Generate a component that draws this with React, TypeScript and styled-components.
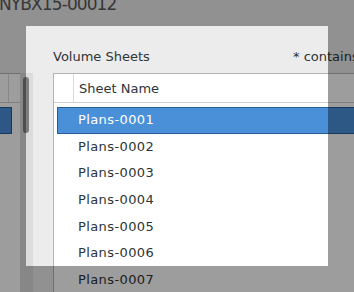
import React from 'react';
import styled, { createGlobalStyle } from 'styled-components';

const Global = createGlobalStyle`
  html, body { margin: 0; padding: 0; }
  body {
    width: 354px;
    height: 292px;
    overflow: hidden;
    background: #ececec;
    font-family: "DejaVu Sans", "Noto Sans", sans-serif;
    color: #2e3436;
  }
`;

const Screen = styled.div`
  position: relative;
  width: 354px;
  height: 292px;
  overflow: hidden;
  display: flex;
  flex-direction: column;
`;

const WindowTitle = styled.div`
  margin-top: -6px;
  margin-left: -1px;
  height: 32px;
  flex: 0 0 32px;
  font-size: 17px;
  letter-spacing: -0.9px;
  line-height: 21px;
  color: #5a5a5a;
  white-space: nowrap;
`;

const Workspace = styled.div`
  flex: 1;
  display: grid;
  grid-template-columns: 20px 13px 420px;
  grid-template-rows: 47px 1fr;
  min-height: 0;
`;

const LabelRow = styled.div`
  grid-column: 3;
  grid-row: 1;
  display: flex;
  align-items: flex-start;
  padding: 23px 0 0 20px;
  font-size: 13px;
  line-height: 16px;
  white-space: nowrap;
`;

const PaneLabel = styled.span`
  flex: 0 0 240px;
`;

const Note = styled.span`
  flex: none;
`;

const SideList = styled.div`
  grid-column: 1;
  grid-row: 2;
  background: #ffffff;
  border-top: 1px solid #b4b4b4;
  overflow: hidden;
`;

const SideHeader = styled.div`
  display: flex;
  height: 28px;
  border-bottom: 1px solid #cfcfcf;
`;

const SideHeaderCell = styled.div`
  width: 8px;
  border-right: 1px solid #dcdcdc;
`;

const SideRows = styled.div`
  padding-top: 4px;
`;

const SideSelected = styled.div`
  margin-left: -2px;
  width: 14px;
  height: 26.667px;
  box-sizing: border-box;
  background: #4a90d9;
  border: 1px solid #2a5d96;
`;

const ScrollTrack = styled.div`
  grid-column: 2;
  grid-row: 2;
  background: #dcdcdc;
  padding: 4px 0 0 3px;
`;

const ScrollThumb = styled.div`
  width: 6px;
  height: 56px;
  border-radius: 3px;
  background: #7d7d7d;
`;

const SheetsPane = styled.div`
  grid-column: 3;
  grid-row: 2;
  padding-left: 20px;
  display: flex;
  min-height: 0;
`;

const Table = styled.div`
  flex: 1;
  background: #ffffff;
  border-top: 1px solid #b4b4b4;
  border-left: 1px solid #b4b4b4;
  display: flex;
  flex-direction: column;
`;

const HeaderRow = styled.div`
  display: flex;
  height: 28px;
  flex: 0 0 28px;
  border-bottom: 1px solid #cfcfcf;
`;

const HeaderCell = styled.div<{ $narrow?: boolean }>`
  ${(p) => (p.$narrow ? 'width: 19px; border-right: 1px solid #dcdcdc;' : 'flex: 1;')}
  padding: 2px 0 0 ${(p) => (p.$narrow ? '0' : '5px')};
  font-size: 13px;
  line-height: 26px;
  white-space: nowrap;
`;

const Rows = styled.div`
  padding: 4px 0 0 3px;
`;

const Row = styled.div<{ $selected?: boolean }>`
  height: 26.667px;
  box-sizing: border-box;
  border: 1px solid ${(p) => (p.$selected ? '#2a5d96' : 'transparent')};
  background: ${(p) => (p.$selected ? '#4a90d9' : 'transparent')};
  color: ${(p) => (p.$selected ? '#ffffff' : '#2e3436')};
  padding: 0 0 1px 20px;
  font-size: 13px;
  letter-spacing: 0.4px;
  line-height: 23.667px;
  white-space: nowrap;
`;

const Spotlight = styled.div`
  position: absolute;
  left: 26px;
  top: 26px;
  width: 302px;
  height: 240px;
  box-shadow: 0 0 0 600px rgba(0, 0, 0, 0.385);
  pointer-events: none;
`;

const sheets = ['Plans-0001', 'Plans-0002', 'Plans-0003', 'Plans-0004', 'Plans-0005', 'Plans-0006', 'Plans-0007'];

export default function App() {
  return (
    <>
      <Global />
      <Screen>
        <WindowTitle>NYBX15-00012</WindowTitle>
        <Workspace>
          <LabelRow>
            <PaneLabel>Volume Sheets</PaneLabel>
            <Note>* contains</Note>
          </LabelRow>
          <SideList>
            <SideHeader>
              <SideHeaderCell />
            </SideHeader>
            <SideRows>
              <SideSelected />
            </SideRows>
          </SideList>
          <ScrollTrack>
            <ScrollThumb />
          </ScrollTrack>
          <SheetsPane>
            <Table>
              <HeaderRow>
                <HeaderCell $narrow />
                <HeaderCell>Sheet Name</HeaderCell>
              </HeaderRow>
              <Rows>
                {sheets.map((s, i) => (
                  <Row key={s} $selected={i === 0}>
                    {s}
                  </Row>
                ))}
              </Rows>
            </Table>
          </SheetsPane>
        </Workspace>
        <Spotlight />
      </Screen>
    </>
  );
}
